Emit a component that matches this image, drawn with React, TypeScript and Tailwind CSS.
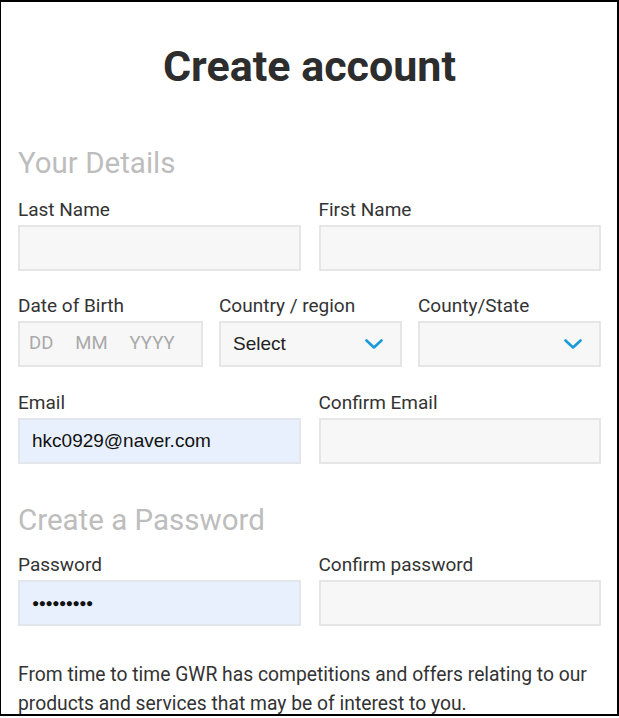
const Chevron = () => (
  <svg width="18" height="10" viewBox="0 0 18 10" className="shrink-0">
    <path d="M1.5 1.5 L9 8.5 L16.5 1.5" fill="none" stroke="#1a9bd7" strokeWidth="2.6" strokeLinecap="round" strokeLinejoin="round" />
  </svg>
);

const Field = ({ label, children }: { label: string; children?: React.ReactNode }) => (
  <div className="flex flex-col">
    <label className="h-[26px] text-[19px] leading-[22px] text-[#333]">{label}</label>
    {children}
  </div>
);

const Box = ({ filled, children }: { filled?: boolean; children?: React.ReactNode }) => (
  <div
    className={
      filled
        ? "flex h-[46px] items-center border-2 border-[#e3e6ea] bg-[#e8f0fe] px-[12px] font-['Liberation_Sans',Arial,sans-serif] text-[19px] text-[#111]"
        : "flex h-[46px] items-center border-2 border-[#e6e6e6] bg-[#f7f7f7] px-[12px] font-['Liberation_Sans',Arial,sans-serif] text-[19px] text-[#222]"
    }
  >
    {children}
  </div>
);

export default function App() {
  return (
    <div className="h-[716px] w-[619px] overflow-hidden border-y-2 border-r-2 border-l border-black bg-white pl-[17px] pr-[16px] font-['Roboto',sans-serif]">
      <h1 className="mt-[40px] text-center text-[43px] font-bold leading-[48px] text-[#2d2d2d]">Create account</h1>

      <h2 className="mt-[55px] text-[29.5px] leading-[36px] text-[#bdbdbd]">Your Details</h2>

      <div className="mt-[18px] grid grid-cols-2 gap-x-[18px]">
        <Field label="Last Name">
          <Box />
        </Field>
        <Field label="First Name">
          <Box />
        </Field>
      </div>

      <div className="mt-[24px] grid grid-cols-[185px_183px_183px] gap-x-[16px]">
        <Field label="Date of Birth">
          <Box>
            <span className="-ml-[3px] flex gap-[22px] font-['Roboto',sans-serif] text-[18.5px] text-[#a9a9a9]">
              <span>DD</span>
              <span>MM</span>
              <span>YYYY</span>
            </span>
          </Box>
        </Field>
        <Field label="Country / region">
          <Box>
            <span className="flex-1">Select</span>
            <span className="mr-[5px]">
              <Chevron />
            </span>
          </Box>
        </Field>
        <Field label="County/State">
          <Box>
            <span className="flex-1" />
            <span className="mr-[5px]">
              <Chevron />
            </span>
          </Box>
        </Field>
      </div>

      <div className="mt-[25px] grid grid-cols-2 gap-x-[18px]">
        <Field label="Email">
          <Box filled>hkc0929@naver.com</Box>
        </Field>
        <Field label="Confirm Email">
          <Box />
        </Field>
      </div>

      <h2 className="mt-[38px] text-[29.5px] leading-[36px] text-[#bdbdbd]">Create a Password</h2>

      <div className="mt-[16px] grid grid-cols-2 gap-x-[18px]">
        <Field label="Password">
          <Box filled>
            <span className="text-[12px] tracking-[-0.5px]">●●●●●●●●●</span>
          </Box>
        </Field>
        <Field label="Confirm password">
          <Box />
        </Field>
      </div>

      <p className="mt-[34px] text-[19.3px] leading-[29px] text-[#333]">
        From time to time GWR has competitions and offers relating to our products and services that may be of interest to you.
      </p>
    </div>
  );
}
